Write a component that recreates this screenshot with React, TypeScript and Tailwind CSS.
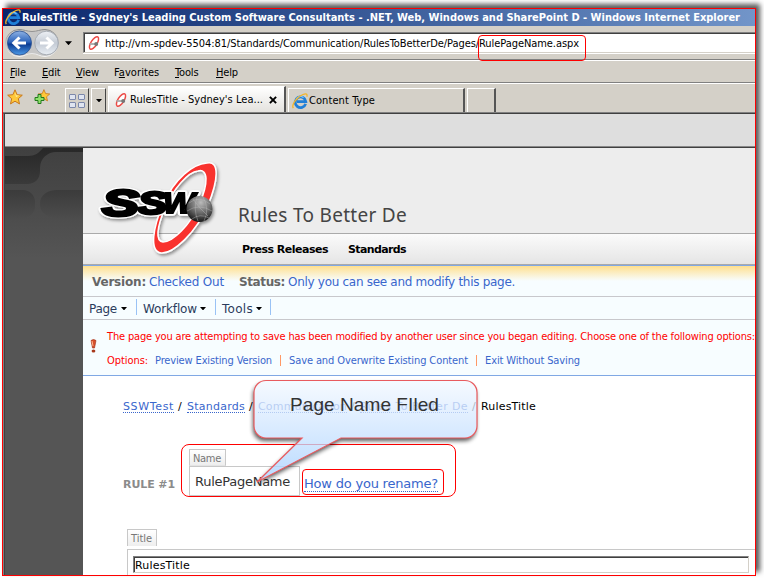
import React, { useLayoutEffect, useRef } from "react";

/** Single-line text whose tracking is adjusted so it fills the width of its box. */
function T({ c, children }: { c: string; children: string }) {
  const box = useRef<HTMLSpanElement>(null);
  const inner = useRef<HTMLSpanElement>(null);
  useLayoutEffect(() => {
    if (!box.current || !inner.current) return;
    inner.current.style.letterSpacing = "0px";
    const gap = box.current.clientWidth - inner.current.getBoundingClientRect().width;
    inner.current.style.letterSpacing = `${gap / children.length}px`;
  }, [children]);
  return (
    <span ref={box} className={`block shrink-0 whitespace-pre ${c}`}>
      <span ref={inner}>{children}</span>
    </span>
  );
}

const tahoma = "font-['DejaVu_Sans_Condensed','DejaVu_Sans',sans-serif] [font-stretch:condensed]";
const verdana = "font-['DejaVu_Sans',sans-serif]";

function IE({ c }: { c: string }) {
  return (
    <svg viewBox="0 0 16 16" className={`shrink-0 ${c}`}>
      <path d="M13.600 10.800A5.300 5.300 0 1 1 13.800 8.600H5" fill="none" stroke="#1f7fd8" strokeWidth="2.800" />
      <path d="M4 6.500A4.800 4.800 0 0 1 11.500 4.600" stroke="#8fd0ff" strokeWidth="1.100" fill="none" />
      <path d="M1.300 15.200C-.8 12 4.500 4 11 1.500c3-1.200 4.800-.6 3.800 2.300" fill="none" stroke="#f3b52a" strokeWidth="1.300" />
    </svg>
  );
}

function Fav({ c }: { c: string }) {
  return (
    <svg viewBox="0 0 16 16" className={`shrink-0 ${c}`}>
      <ellipse cx="8" cy="8" rx="3" ry="7.200" transform="rotate(32 8 8)" fill="#fff" stroke="#ec4a46" strokeWidth="1.500" />
      <path d="M3.500 9h6" stroke="#aaa" strokeWidth="1.800" />
      <circle cx="10.200" cy="9" r="2" fill="#777" />
    </svg>
  );
}

function Arrow({ c = "" }: { c?: string }) {
  return <svg viewBox="0 0 6 3" className={`h-[3px] w-[6px] shrink-0 ${c}`}><path d="M0 0h6L3 3.400z" fill="#000" /></svg>;
}

function MenuItem({ c, a, k, b }: { c: string; a: string; k: string; b: string }) {
  return <span className={`block shrink-0 whitespace-nowrap tracking-[-0.15px] ${c}`}>{a}<span className="underline underline-offset-1">{k}</span>{b}</span>;
}

function NavButtons() {
  return (
    <svg viewBox="0 0 56 30" className="ml-[1px] h-[30px] w-[56px] shrink-0">
      <defs>
        <linearGradient id="bk" x1="0" y1="0" x2="0" y2="1">
          <stop offset="0" stopColor="#8fb2e4" /><stop offset=".45" stopColor="#2f66bc" />
          <stop offset=".55" stopColor="#0b3c93" /><stop offset="1" stopColor="#4d9be8" />
        </linearGradient>
        <linearGradient id="fw" x1="0" y1="0" x2="0" y2="1">
          <stop offset="0" stopColor="#eef1f5" /><stop offset=".5" stopColor="#c3cad4" /><stop offset="1" stopColor="#e9eef4" />
        </linearGradient>
        <linearGradient id="rim" x1="0" y1="0" x2="0" y2="1">
          <stop offset="0" stopColor="#8b8b8b" /><stop offset="1" stopColor="#f4f4f4" />
        </linearGradient>
      </defs>
      <path d="M15 1.500c5 0 8 2 13 2s8-2 13-2a13.400 13.400 0 0 1 0 27c-5 0-8-3-13-3s-8 3-13 3a13.400 13.400 0 0 1 0-27z" fill="#c6c6c6" stroke="url(#rim)" />
      <circle cx="15.500" cy="15" r="12" fill="url(#bk)" stroke="#284f8f" strokeWidth=".8" />
      <circle cx="42.500" cy="15" r="11.800" fill="url(#fw)" stroke="#9ba1aa" strokeWidth=".8" />
      <path d="M22 15H10.500M15.500 9.500 9.800 15l5.700 5.500" fill="none" stroke="#fff" strokeWidth="3" />
      <path d="M36 15H47.500M42.500 9.500l5.700 5.500-5.700 5.500" fill="none" stroke="#fff" strokeWidth="3" />
    </svg>
  );
}

const starPath = "M8 .8l2.100 4.900 5.200.5-4 3.500 1.200 5.200L8 12.200l-4.500 2.700 1.200-5.200-4-3.500 5.200-.5z";

function Browser() {
  return (
    <>
      <div className={`flex h-[17px] shrink-0 items-start bg-linear-to-r from-[#0a246a] to-[#7295c9] text-[11px] leading-[17px] font-bold text-white ${tahoma}`}>
        <IE c="ml-[2px] h-[16px] w-[16px]" />
        <T c="ml-px w-[718px]">RulesTitle - Sydney's Leading Custom Software Consultants - .NET, Web, Windows and SharePoint D - Windows Internet Explorer</T>
      </div>
      <div className="flex h-[34px] shrink-0 border-b border-[#808080]">
        <div className="flex h-[33px] items-center pt-[1px]"><NavButtons /><Arrow c="ml-[5px] h-[4px] w-[7px]" /></div>
        <div className="mt-[6px] ml-[11px] flex h-[22px] flex-1 flex-col border-b border-white">
          <div className="flex h-[21px] items-center border-t border-b border-l border-t-[#808080] border-b-[#d4d0c8] border-l-[#808080]">
            <div className={`flex h-[19px] w-full items-center border-t border-l border-[#404040] bg-white text-[11px] leading-[17px] text-black ${tahoma}`}>
              <Fav c="ml-px h-[16px] w-[16px]" />
              <T c="ml-[3px] mt-px w-[474px]">http://vm-spdev-5504:81/Standards/Communication/RulesToBetterDe/Pages/RulePageName.aspx</T>
            </div>
          </div>
        </div>
      </div>
      <div className={`flex h-[23px] shrink-0 border-t border-b border-t-white border-b-[#808080] pt-px text-[11px] leading-[21px] text-black ${tahoma}`}>
        <MenuItem c="ml-[7px] w-[32px]" a="" k="F" b="ile" />
        <MenuItem c="w-[34px]" a="" k="E" b="dit" />
        <MenuItem c="w-[38px]" a="" k="V" b="iew" />
        <MenuItem c="w-[61px] tracking-[0.080px]" a="F" k="a" b="vorites" />
        <MenuItem c="w-[41px]" a="" k="T" b="ools" />
        <MenuItem c="" a="" k="H" b="elp" />
      </div>
      <div className={`flex h-[30px] shrink-0 items-end border-t border-b border-t-white border-b-[#808080] text-[11px] text-black ${tahoma}`}>
        <svg viewBox="0 0 16 16" className="mb-[7px] ml-[4px] h-[16px] w-[16px]">
          <path d={starPath} fill="#ffc83a" stroke="#c9781a" /><path d="M8 3l1.300 3.500h3L9 8z" fill="#fff3a8" />
        </svg>
        <svg viewBox="0 0 16 16" className="mb-[7px] ml-[11px] h-[16px] w-[16px]">
          <path d={starPath} fill="#ffc83a" stroke="#c9781a" transform="translate(3.500 0) scale(.8)" />
          <path d="M4 5.500h3v3h3v3H7v3H4v-3H1v-3h3z" fill="#8fe06a" stroke="#237a1c" />
        </svg>
        <div className="ml-[15px] flex h-[24px] w-[24px] items-center justify-center border-t border-l border-r border-t-white border-l-white border-r-[#444]">
          <div className="grid grid-cols-2 gap-[2px]">
            <i className="h-[6px] w-[7px] rounded-[1px] border border-[#7c88ab] bg-[#dfe4f0]" /><i className="h-[6px] w-[7px] rounded-[1px] border border-[#7c88ab] bg-[#dfe4f0]" />
            <i className="h-[6px] w-[7px] rounded-[1px] border border-[#7c88ab] bg-[#dfe4f0]" /><i className="h-[6px] w-[7px] rounded-[1px] border border-[#7c88ab] bg-[#dfe4f0]" />
          </div>
        </div>
        <div className="ml-[2px] flex h-[24px] w-[15px] items-center justify-center border-t border-l border-r border-t-white border-l-white border-r-[#444]"><Arrow c="w-[5px]" /></div>
        <div className="ml-[2px] flex h-[26px] w-[178px] items-center border-t border-l border-r-2 border-t-white border-l-white border-r-[#555] bg-linear-to-b from-white to-[#e4e2de]">
          <Fav c="ml-[4px] h-[16px] w-[16px]" />
          <T c="ml-px mt-px w-[133px]">RulesTitle - Sydney's Lea...</T>
          <svg viewBox="0 0 9 9" className="ml-[6px] mt-px h-[8px] w-[8px]"><path d="M1 1l7 7M8 1L1 8" stroke="#000" strokeWidth="2.200" /></svg>
        </div>
        <div className="ml-[2px] flex h-[24px] w-[177px] items-center border-t border-l border-r-2 border-t-white border-l-white border-r-[#555]">
          <IE c="ml-[3px] h-[16px] w-[16px]" />
          <T c="ml-px mt-px w-[66px]">Content Type</T>
        </div>
        <div className="ml-[2px] h-[24px] w-[29px] border-t border-l border-r-2 border-t-white border-l-white border-r-[#555]" />
      </div>
    </>
  );
}

function Sidebar() {
  return (
    <div className="w-[78px] shrink-0 bg-[#555]">
      <svg viewBox="0 0 78 130" className="block h-[130px] w-[78px]">
        <defs>
          <linearGradient id="sa" x1="0" y1="0" x2="0" y2="1"><stop offset="0" stopColor="#404040" /><stop offset=".4" stopColor="#494949" /><stop offset=".85" stopColor="#555" /></linearGradient>
          <linearGradient id="sb" gradientUnits="userSpaceOnUse" x1="0" y1="0" x2="0" y2="36"><stop offset="0" stopColor="#272727" /><stop offset="1" stopColor="#3a3a3a" /></linearGradient>
          <linearGradient id="sc" x1="0" y1="0" x2="0" y2="1"><stop offset="0" stopColor="#3b3b3b" /><stop offset="1" stopColor="#4c4c4c" /></linearGradient>
        </defs>
        <path d="M0 0h78v130H0z" fill="url(#sa)" />
        <path d="M38 0h40v4H51c-8 0-16 6-16 16v3c0 8-5 13-13 13H0V8h23c7 0 11-3 15-8z" fill="url(#sb)" />
        <path d="M0 42h18a12 12 0 0 1 12 12v4a12 12 0 0 1-12 12H0zM78 42H52c-8 0-17 4-17 14s9 14 17 14h26z" fill="url(#sc)" />
      </svg>
    </div>
  );
}

function Logo() {
  return (
    <svg viewBox="95 155 130 105" className="absolute top-[7px] left-[12px] h-[105px] w-[130px] overflow-visible">
      <defs>
        <filter id="ls" x="-20%" y="-20%" width="140%" height="140%"><feDropShadow dx="1.500" dy="2" stdDeviation="1.500" floodOpacity=".4" /></filter>
        <radialGradient id="gl" cx=".55" cy=".25" r=".85"><stop offset="0" stopColor="#bbb" /><stop offset=".5" stopColor="#666" /><stop offset="1" stopColor="#000" /></radialGradient>
      </defs>
      <g filter="url(#ls)">
        <path fillRule="evenodd" d="M207 163C220 160 218 181 208 205C196 233 173 254 161 253C149 251 153 228 163 204C175 178 193 164 207 163ZM198 171C188 172 174 188 165 208C157 227 155 241 163 242C173 242 190 225 199 205C209 183 208 168 198 171Z" fill="#f9322f" stroke="#fff" strokeWidth="1.500" />
        <g fontFamily="Liberation Sans, Arial, sans-serif" fontWeight="700" fontStyle="italic" stroke="#fff" strokeWidth="5.500" strokeLinejoin="round">
          <text x="102" y="215.500" fontSize="37" textLength="37" lengthAdjust="spacingAndGlyphs">S</text>
          <text x="138" y="213.500" fontSize="31" textLength="29" lengthAdjust="spacingAndGlyphs">S</text>
          <text x="163" y="213" fontSize="29" textLength="32" lengthAdjust="spacingAndGlyphs">W</text>
        </g>
        <g fontFamily="Liberation Sans, Arial, sans-serif" fontWeight="700" fontStyle="italic" stroke="#000" strokeWidth="2.800">
          <text x="102" y="215.500" fontSize="37" textLength="37" lengthAdjust="spacingAndGlyphs">S</text>
          <text x="138" y="213.500" fontSize="31" textLength="29" lengthAdjust="spacingAndGlyphs">S</text>
          <text x="163" y="213" fontSize="29" textLength="32" lengthAdjust="spacingAndGlyphs" strokeWidth="1.800">W</text>
        </g>
        <circle cx="199.500" cy="209" r="13" fill="url(#gl)" />
        <path d="M189 203q10-8 21 1M187 211q12-8 25 0M192 219q8-6 17-1M197 197q-4 12 1 24M203 197q7 12 1 24M193 199l7 9 8 8" fill="none" stroke="#bbb" strokeOpacity=".7" strokeWidth=".6" />
      </g>
    </svg>
  );
}

const link = "text-[#3966cc]";
const crumb = "text-[#3966cc] border-b border-dotted border-[#3966cc] h-[14px]";
const callout = "M20 8.500H219a12 12 0 0 1 12 12V54a12 12 0 0 1-12 12H95L11 110 56 66H20a12 12 0 0 1-12-12V20.500a12 12 0 0 1 12-12z";

function Page() {
  return (
    <div className={`flex min-w-0 flex-1 flex-col bg-white ${verdana}`}>
      <div className="relative h-[85px] shrink-0 bg-[#ededed]">
        <Logo />
        <div className="pt-[53px] pl-[155px] font-['Noto_Sans',sans-serif] text-[19px] leading-[28px] text-[#444]"><T c="w-[169px]">Rules To Better De</T></div>
      </div>
      <div className="flex h-[32px] shrink-0 border-t border-b border-[#aaa] bg-linear-to-b from-[#fbfbfb] to-[#e5e5e5] pt-px pl-[159px] text-[11px] leading-[29px] font-bold text-black">
        <T c="w-[86px]">Press Releases</T><T c="ml-[20px] w-[58px]">Standards</T>
      </div>
      <div className="flex h-[32px] shrink-0 border-t border-b border-t-[#80a8e4] border-b-[#c8c8cc] bg-[#f7fdff] bg-linear-to-b from-[#ffdf8c] to-[#f7fdff] to-50% pl-[9px] text-[12px] leading-[32px]">
        <T c="w-[54px] font-bold text-[#666]">Version:</T><T c={`ml-[3px] w-[75px] ${link}`}>Checked Out</T>
        <T c="ml-[15px] w-[46px] font-bold text-[#666]">Status:</T><T c={`ml-[3px] w-[227px] ${link}`}>Only you can see and modify this page.</T>
      </div>
      <div className="flex h-[23px] shrink-0 items-start border-b border-[#c8c8cc] bg-[#f7fdff] pl-[6px] text-[12px] leading-[24px] text-[#2b3c5c]">
        <T c="w-[28px]">Page</T><Arrow c="mt-[10px] ml-[4px]" /><i className="mt-[2px] ml-[9px] h-[16px] w-px bg-[#99c2f5]" />
        <T c="ml-[6px] w-[54px]">Workflow</T><Arrow c="mt-[10px] ml-[3px]" /><i className="mt-[2px] ml-[9px] h-[16px] w-px bg-[#99c2f5]" />
        <T c="ml-[6px] w-[31px]">Tools</T><Arrow c="mt-[10px] ml-[3px]" /><i className="mt-[2px] ml-[8px] h-[16px] w-px bg-[#99c2f5]" />
      </div>
      <div className={`flex h-[56px] shrink-0 border-b border-[#80a8e4] bg-[#f7fdff] text-[11px] leading-[16px] text-[#f00] ${tahoma}`}>
        <svg viewBox="0 0 7 14" className="mt-[19px] ml-[7px] h-[14px] w-[7px] shrink-0"><path d="M1 1.500Q3.500-.5 6 1.500L4.500 9h-2z" fill="#d8502c" stroke="#9b2c12" strokeWidth=".6" /><path d="M2 2l1 5" stroke="#ffb58d" /><ellipse cx="3.500" cy="12" rx="1.900" ry="1.500" fill="#a83a1c" /></svg>
        <div className="ml-[10px] pt-[9px]">
          <T c="w-[648px]">The page you are attempting to save has been modified by another user since you began editing. Choose one of the following options:</T>
          <div className="mt-[8px] flex">
            <T c="w-[41px]">Options:</T><T c={`ml-[7px] w-[117px] ${link}`}>Preview Existing Version</T>
            <i className="mt-[2px] ml-[8px] h-[11px] w-px bg-[#f96]" /><T c={`ml-[8px] w-[179px] ${link}`}>Save and Overwrite Existing Content</T>
            <i className="mt-[2px] ml-[8px] h-[11px] w-px bg-[#f96]" /><T c={`ml-[8px] w-[95px] ${link}`}>Exit Without Saving</T>
          </div>
        </div>
      </div>
      <div className="flex h-[68px] shrink-0 pt-[23px] pl-[40px] text-[11px] leading-[15px] text-black">
        <T c={`w-[51px] ${crumb}`}>SSWTest</T><T c="ml-[4px] w-[5px]">/</T><T c={`ml-[4px] w-[58px] ${crumb}`}>Standards</T><T c="ml-[4px] w-[5px]">/</T>
        <T c={`ml-[4px] w-[89px] ${crumb}`}>Communication</T><T c="ml-[4px] w-[5px]">/</T><T c={`ml-[4px] w-[108px] ${crumb}`}>Rules To Better De</T><T c="ml-[4px] w-[5px]">/</T>
        <T c="ml-[4px] w-[55px]">RulesTitle</T>
      </div>
      <div className="flex h-[53px] shrink-0 pl-[40px]">
        <T c="w-[52px] pt-[33px] text-[11px] leading-[16px] font-bold text-[#8b8b8b]">RULE #1</T>
        <div className="ml-[6px] flex w-[275px] shrink-0 rounded-[8px] border border-[#f00] pl-[7px]">
          <div className="shrink-0 pt-[4px]">
            <div className={`h-[17px] w-[37px] border border-[#c8c8c8] border-b-[#e4e4e4] bg-linear-to-b from-white to-[#eee] pl-[3px] text-[11px] leading-[17px] text-[#777] ${tahoma}`}><T c="w-[28px]">Name</T></div>
            <div className="h-[30px] w-[111px] border border-[#c8c8c8] pl-[5px] text-[13px] leading-[29px] text-[#333]"><T c="w-[95px]">RulePageName</T></div>
          </div>
          <div className="mt-[24px] ml-[2px] h-[26px] w-[142px] rounded-[4px] border border-[#f00] pt-[4px] pl-px text-[13px] leading-[19px]"><T c={`h-[18px] w-[134px] border-b border-dotted border-[#3966cc] ${link}`}>How do you rename?</T></div>
        </div>
      </div>
      <div className="pt-[32px] pl-[44px]">
        <div className={`h-[17px] w-[30px] border border-b-0 border-[#c8c8c8] bg-linear-to-b from-white to-[#eee] pl-[3px] text-[11px] leading-[17px] text-[#777] ${tahoma}`}><T c="w-[21px]">Title</T></div>
        <div className="mt-[3px] h-[26px] border-t border-l border-[#c8c8c8] pt-[6px] pl-[5px]">
          <div className="h-[17px] w-[616px] border border-t-[#808080] border-r-[#d4d0c8] border-b-[#d4d0c8] border-l-[#808080]">
            <div className="h-[15px] border-t border-l border-[#404040] text-[11px] leading-[15px] text-black"><T c="w-[55px]">RulesTitle</T></div>
          </div>
        </div>
      </div>
    </div>
  );
}

export default function App() {
  return (
    <div className="relative h-[578px] w-[764px] overflow-hidden bg-white pt-[8px] pl-[2px]">
      <div className="h-[568px] w-[754px] bg-[#d4d0c8] shadow-[4px_-4px_5px_rgba(0,0,0,0.65)]">
        <div className="flex h-[568px] w-[754px] flex-col overflow-hidden border border-[#f00]">
          <Browser />
          <div className="flex h-[462px] shrink-0 flex-col border-t border-l border-t-[#404040] border-l-[#808080]">
            <div className="flex h-[461px] flex-col border-l border-[#404040]">
              <div className="h-[34px] shrink-0 border-b border-[#404040] bg-[#dedede]"><div className="h-[33px] border-b border-[#888]" /></div>
              <div className="flex min-h-0 flex-1"><Sidebar /><Page /></div>
            </div>
          </div>
        </div>
      </div>
      <div className="absolute top-[35px] left-[478px] h-[26px] w-[108px] rounded-[4px] border border-[#f00]" />
      <svg viewBox="0 0 240 120" className="absolute top-[372px] left-[246px] h-[120px] w-[240px] overflow-visible">
        <defs>
          <linearGradient id="cg" x1="0" y1="0" x2="0" y2="1"><stop offset="0" stopColor="#f3f8ff" /><stop offset="1" stopColor="#a4cfff" /></linearGradient>
          <filter id="cs" x="-20%" y="-20%" width="140%" height="140%">
            <feGaussianBlur in="SourceAlpha" stdDeviation="2" result="blur" />
            <feOffset in="blur" dx="-1" dy="2.500" result="off" />
            <feComposite in="off" in2="SourceAlpha" operator="out" />
          </filter>
        </defs>
        <path d={callout} fill="#000" opacity=".65" filter="url(#cs)" />
        <path d={callout} fill="url(#cg)" fillOpacity=".76" stroke="#e85a5e" strokeWidth="1.200" />
      </svg>
      <div className="absolute top-[393px] left-[290px] font-['Liberation_Sans',Arial,sans-serif] text-[19px] leading-[23px] text-[#333]"><T c="w-[149px]">Page Name FIled</T></div>
    </div>
  );
}
